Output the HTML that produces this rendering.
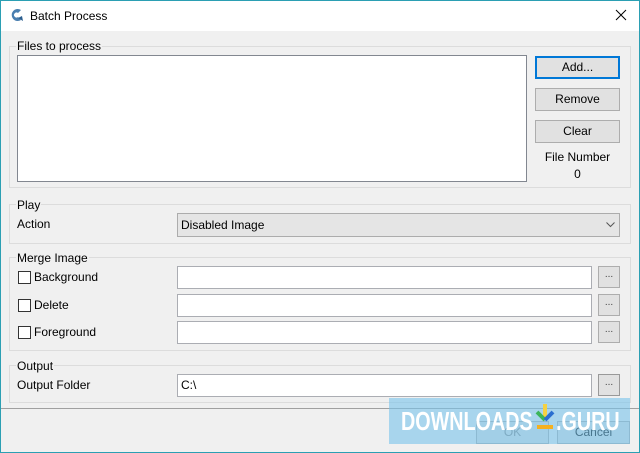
<!DOCTYPE html>
<html><head><style>
*{margin:0;padding:0;box-sizing:border-box}
body{width:640px;height:453px;background:#f0f0f0;font-family:"Liberation Sans",sans-serif;font-size:12px;color:#000;position:relative;overflow:hidden}
.a{position:absolute}
.win{left:0;top:0;width:640px;height:453px;border:1px solid #2b9fb3}
.grp{border:1px solid #dcdcdc;left:9px;width:622px}
.lbl{background:#f0f0f0;padding:0 1px;line-height:14px}
.btn{background:#e1e1e1;border:1px solid #adadad;text-align:center;line-height:20px}
.inp{background:#fff;border:1px solid #abadb3;padding-left:3px;line-height:20px}
.cb{width:13px;height:13px;border:1px solid #333;background:#fff}
.dot{background:#e1e1e1;border:1px solid #adadad;text-align:center;line-height:16px;font-size:10px;color:#444;width:22px;height:22px}
.wm{font-size:26px;font-weight:bold;color:#fff;transform:scaleX(0.76);transform-origin:left;white-space:nowrap}
</style></head><body>
<div class="a" style="left:0;top:0;width:640px;height:31px;background:#fff"></div>
<svg class="a" style="left:9px;top:7px" width="16" height="16" viewBox="0 0 16 16"><path d="M12 3A6 6 0 1 0 12 13L9 10A2.5 2.5 0 1 1 9 6Z" fill="#4a7fb0"/><path d="M9 11l5 3-1-5z" fill="#2d5f8f"/></svg>
<div class="a" style="left:30px;top:9px;font-size:12px">Batch Process</div>
<svg class="a" style="left:615px;top:9px" width="12" height="12"><path d="M1 1L11 11M11 1L1 11" stroke="#000" stroke-width="1"/></svg>

<div class="a grp" style="top:46px;height:142px"></div>
<div class="a lbl" style="left:16px;top:39px">Files to process</div>
<div class="a" style="left:17px;top:55px;width:510px;height:127px;background:#fff;border:1px solid #828790"></div>
<div class="a btn" style="left:535px;top:56px;width:85px;height:23px;border:2px solid #0078d7;line-height:19px">Add...</div>
<div class="a btn" style="left:535px;top:88px;width:85px;height:23px">Remove</div>
<div class="a btn" style="left:535px;top:120px;width:85px;height:23px">Clear</div>
<div class="a" style="left:535px;top:150px;width:85px;text-align:center">File Number</div>
<div class="a" style="left:535px;top:167px;width:85px;text-align:center">0</div>

<div class="a grp" style="top:204px;height:40px"></div>
<div class="a lbl" style="left:16px;top:198px">Play</div>
<div class="a" style="left:17px;top:217px">Action</div>
<div class="a" style="left:177px;top:213px;width:443px;height:24px;background:#e5e5e5;border:1px solid #acacac;padding-left:3px;line-height:22px">Disabled Image</div>
<svg class="a" style="left:606px;top:222px" width="9" height="6"><path d="M0.5 0.5L4.5 4.5L8.5 0.5" stroke="#555" fill="none"/></svg>

<div class="a grp" style="top:257px;height:94px"></div>
<div class="a lbl" style="left:16px;top:251px">Merge Image</div>
<div class="a cb" style="left:18px;top:271px"></div><div class="a" style="left:34px;top:270px">Background</div>
<div class="a inp" style="left:177px;top:266px;width:415px;height:23px"></div>
<div class="a dot" style="left:598px;top:266px">...</div>
<div class="a cb" style="left:18px;top:299px"></div><div class="a" style="left:34px;top:298px">Delete</div>
<div class="a inp" style="left:177px;top:294px;width:415px;height:23px"></div>
<div class="a dot" style="left:598px;top:294px">...</div>
<div class="a cb" style="left:18px;top:326px"></div><div class="a" style="left:34px;top:325px">Foreground</div>
<div class="a inp" style="left:177px;top:321px;width:415px;height:23px"></div>
<div class="a dot" style="left:598px;top:321px">...</div>

<div class="a grp" style="top:365px;height:38px"></div>
<div class="a lbl" style="left:16px;top:359px">Output</div>
<div class="a" style="left:17px;top:378px">Output Folder</div>
<div class="a inp" style="left:177px;top:374px;width:415px;height:23px">C:\</div>
<div class="a dot" style="left:598px;top:374px;border-color:#999">...</div>

<div class="a" style="left:1px;top:408px;width:638px;height:1px;background:#a0a0a0"></div>
<div class="a btn" style="left:476px;top:421px;width:73px;height:23px;color:#888">OK</div>
<div class="a btn" style="left:557px;top:421px;width:73px;height:23px">Cancel</div>

<div class="a" style="left:389px;top:398px;width:241px;height:46px;background:rgba(120,195,235,0.6)"></div>
<div class="a wm" style="left:401px;top:406px">DOWNLOADS</div>
<svg class="a" style="left:534px;top:402px" width="22" height="30"><path d="M11 2V16" stroke="#f5d142" stroke-width="4"/><path d="M3 10L11 18" stroke="#3cb55a" stroke-width="4"/><path d="M19 10L11 18" stroke="#2a6fd0" stroke-width="4"/><rect x="3" y="23" width="16" height="4" fill="#f5b020"/></svg>
<div class="a wm" style="left:556px;top:406px">.GURU</div>
<div class="a win"></div>
</body></html>
